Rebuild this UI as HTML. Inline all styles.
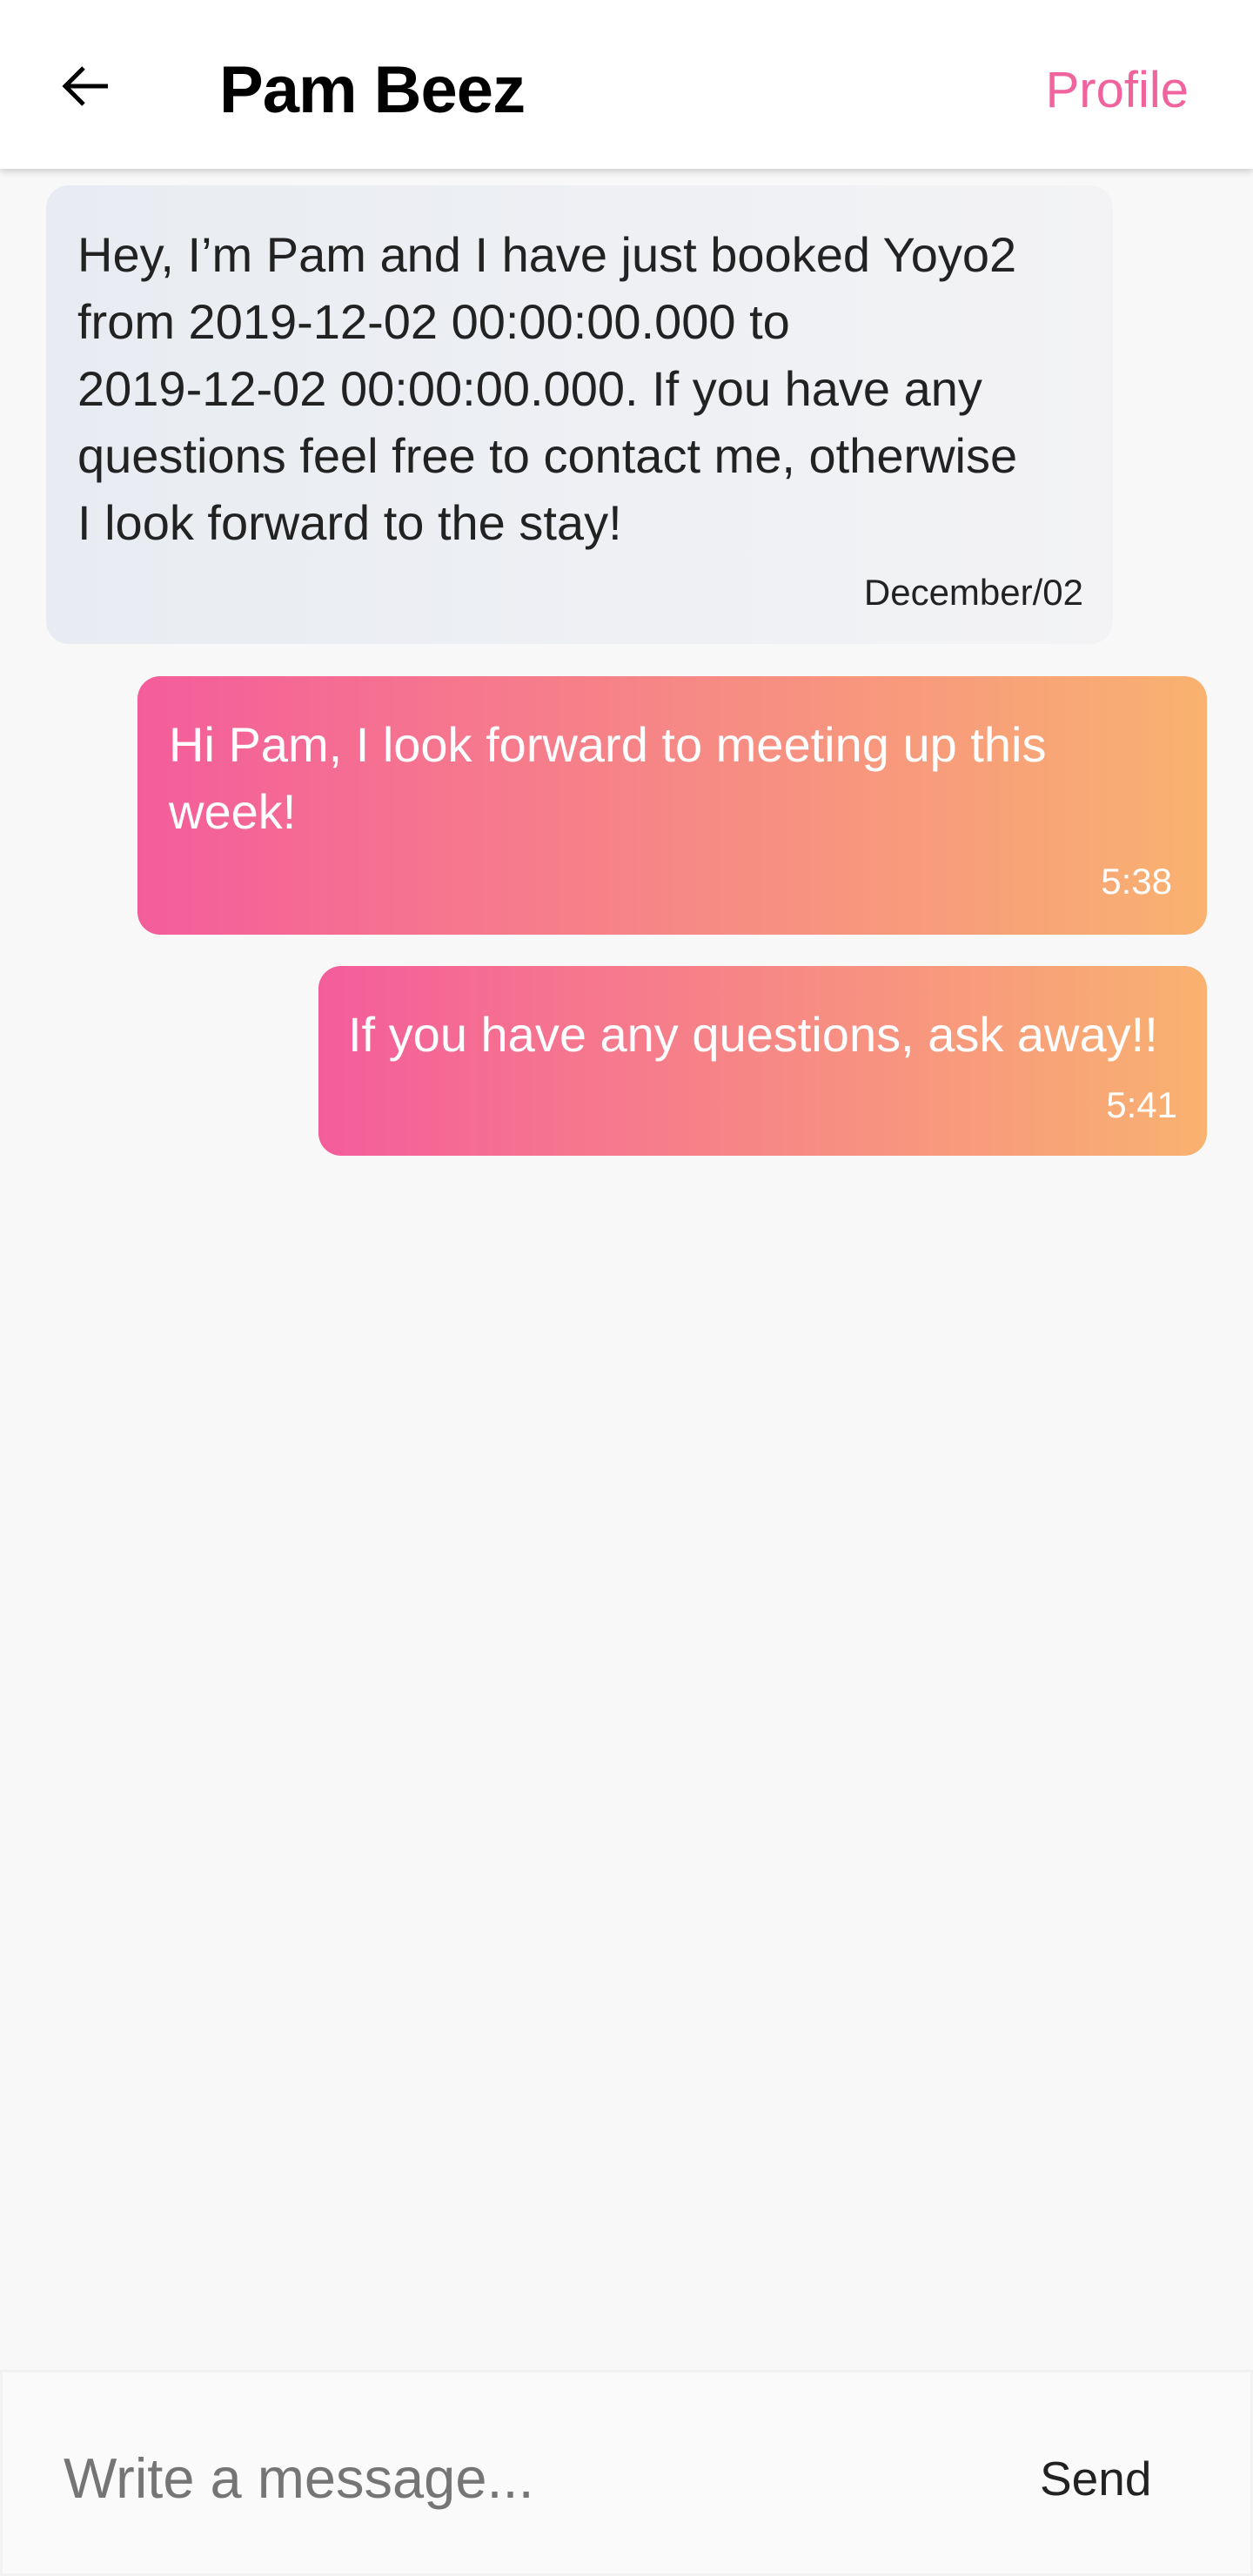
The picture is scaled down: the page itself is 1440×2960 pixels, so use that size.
<!DOCTYPE html>
<html><head><meta charset="utf-8">
<style>
*{margin:0;padding:0;box-sizing:border-box}
html,body{width:1440px;height:2960px;background:#f8f8f8;font-family:"Liberation Sans",sans-serif;overflow:hidden;position:relative}
.hdr{position:absolute;left:0;top:0;width:1440px;height:194px;background:#fff;box-shadow:0 3px 8px rgba(0,0,0,0.18);z-index:2}
.title{position:absolute;left:252px;top:60px;font-size:76px;font-weight:bold;color:#000;letter-spacing:-1px}
.prof{position:absolute;right:74px;top:70px;font-size:58px;color:#f0639c}
.b{position:absolute;border-radius:26px;white-space:nowrap}
.b1{left:53px;top:213px;width:1226px;height:527px;background:linear-gradient(90deg,#e8ecf2,#f3f3f5);color:#222}
.g{background:linear-gradient(90deg,#f45d9b,#f9b270);color:#fff}
.t{position:absolute;font-size:56px;line-height:77px}
.time{position:absolute;font-size:42px}
.bar{position:absolute;left:0;top:2723px;width:1440px;height:237px;background:#fafafa;border:3px solid #f2f2f2}
</style></head><body>
<div class="hdr">
<svg style="position:absolute;left:68px;top:72px" width="60" height="54" viewBox="0 0 60 54"><path d="M56 27H8M28 6L7 27l21 21" fill="none" stroke="#000" stroke-width="5"/></svg>
<div class="title">Pam Beez</div>
<div class="prof">Profile</div>
</div>
<div class="b b1">
<div class="t" style="left:36px;top:41px">Hey, I’m Pam and I have just booked Yoyo2<br>from 2019-12-02 00:00:00.000 to<br>2019-12-02 00:00:00.000. If you have any<br>questions feel free to contact me, otherwise<br>I look forward to the stay!</div>
<div class="time" style="right:34px;top:444px">December/02</div>
</div>
<div class="b g" style="left:158px;top:777px;width:1229px;height:297px">
<div class="t" style="left:36px;top:40px">Hi Pam, I look forward to meeting up this<br>week!</div>
<div class="time" style="right:40px;top:212px">5:38</div>
</div>
<div class="b g" style="left:366px;top:1110px;width:1021px;height:218px">
<div class="t" style="left:34px;top:40px">If you have any questions, ask away!!</div>
<div class="time" style="right:34px;top:136px">5:41</div>
</div>
<div class="bar">
<div style="position:absolute;left:70px;top:84px;font-size:65px;color:#757575">Write a message...</div>
<div style="position:absolute;left:1192px;top:90px;font-size:55px;color:#222">Send</div>
</div>
</body></html>
